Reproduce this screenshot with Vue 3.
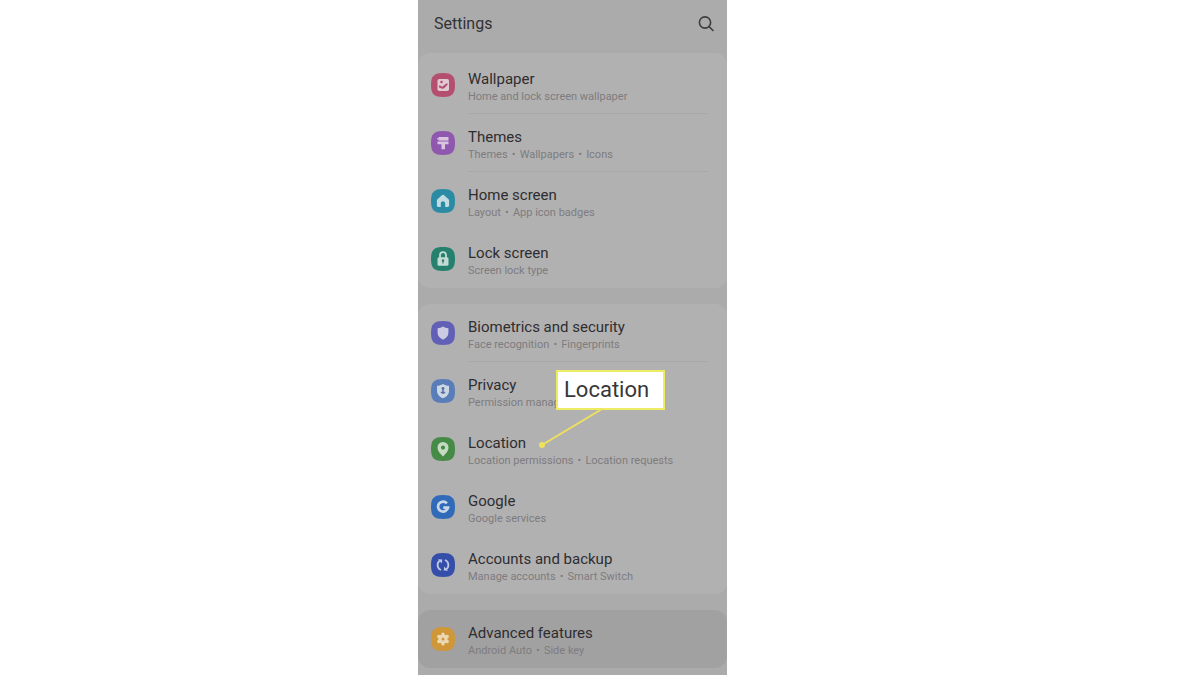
<script setup>
const groups = [
  {
    id: 'display',
    items: [
      { id: 'wallpaper', title: 'Wallpaper', details: ['Home and lock screen wallpaper'], color: '#b54f70', line: true },
      { id: 'themes', title: 'Themes', details: ['Themes', 'Wallpapers', 'Icons'], color: '#8f57ae', line: true },
      { id: 'home', title: 'Home screen', details: ['Layout', 'App icon badges'], color: '#2b8ba4' },
      { id: 'lock', title: 'Lock screen', details: ['Screen lock type'], color: '#26806e' },
    ],
  },
  {
    id: 'security',
    items: [
      { id: 'biometrics', title: 'Biometrics and security', details: ['Face recognition', 'Fingerprints'], color: '#6160b6', line: true },
      { id: 'privacy', title: 'Privacy', details: ['Permission manager'], color: '#587db8' },
      { id: 'location', title: 'Location', details: ['Location permissions', 'Location requests'], color: '#458b46', callout: 'Location' },
      { id: 'google', title: 'Google', details: ['Google services'], color: '#316ab9' },
      { id: 'accounts', title: 'Accounts and backup', details: ['Manage accounts', 'Smart Switch'], color: '#344eaa' },
    ],
  },
  {
    id: 'advanced',
    pressed: true,
    items: [
      { id: 'features', title: 'Advanced features', details: ['Android Auto', 'Side key'], color: '#cf9738' },
    ],
  },
]
</script>

<template>
  <div class="page">
    <main class="phone">
      <header class="header">
        <h1 class="heading">Settings</h1>
        <button class="search" type="button" aria-label="Search">
          <svg viewBox="0 0 18 18" width="18" height="18" fill="none" stroke="#3c3b3d" stroke-width="1.6" stroke-linecap="round">
            <circle cx="8" cy="7.500" r="5.600" />
            <path d="M12.200 11.700 16 15.500" />
          </svg>
        </button>
      </header>

      <nav class="groups" aria-label="Settings">
        <ul v-for="group in groups" :key="group.id" class="group" :class="{ pressed: group.pressed }">
          <li v-for="item in group.items" :key="item.id" class="item">
            <a class="row" :href="'#' + item.id">
              <svg class="icon" viewBox="0 0 24 24" width="24" height="24" aria-hidden="true">
                <path d="M12 0C21 0 24 3 24 12S21 24 12 24 0 21 0 12 3 0 12 0Z" :fill="item.color" />
                <g v-if="item.id === 'wallpaper'">
                  <rect x="6.500" y="6" width="11.500" height="12" rx="1.800" fill="#e0c9d2" />
                  <circle cx="10.500" cy="9" r="1.300" :fill="item.color" />
                  <path d="M8 12.600c1.200-.4 2 .5 2.900 1 1.300.5 2.200-2.700 5.600-3.400v1.800c-1.700 1-2.700 3.600-4.700 3.700-1.500.1-2.300-1.300-3.800-1.300Z" :fill="item.color" />
                </g>
                <g v-else-if="item.id === 'themes'" fill="#d9c5e1">
                  <path d="M7.500 6h10v3.600h-10Z" />
                  <path d="M6 7.300h1.500v1.200H6ZM6.500 10.600h11v2.700h-3.500V18.300h-3.500v-5H6.500Z" />
                </g>
                <path v-else-if="item.id === 'home'" fill="#c3dce2" d="M12 5.800c.5 0 .8.2 1.100.5l4.400 4c.4.4.6.8.6 1.300v5c0 .8-.5 1.300-1.300 1.300h-2.600v-3.600c0-2.700-4.400-2.700-4.400 0v3.600H7.200c-.8 0-1.300-.5-1.300-1.300v-5c0-.5.2-.9.6-1.300l4.400-4c.3-.3.6-.5 1.100-.5Z" />
                <g v-else-if="item.id === 'lock'">
                  <path d="M9 11V8.200a3 3 0 0 1 6 0V11" fill="none" stroke="#c2dcd5" stroke-width="1.800" />
                  <rect x="6.500" y="10.300" width="11" height="8.500" rx="1.500" fill="#c2dcd5" />
                  <circle cx="12" cy="13.600" r="1.300" fill="#47776d" />
                  <path d="M12 14v2.600" stroke="#47776d" stroke-width="1.200" />
                </g>
                <path v-else-if="item.id === 'biometrics'" fill="#cdcbe3" d="M12 5.600c1.700 1.200 3.400 1.600 5.400 1.700v4.500c0 3.300-2 5.200-5.400 6.900-3.400-1.700-5.400-3.600-5.400-6.900V7.300c2-.1 3.700-.5 5.400-1.700Z" />
                <g v-else-if="item.id === 'privacy'">
                  <path fill="#cbd7e5" d="M12 5c1.900 1.300 3.700 1.700 6 1.800v4.900c0 3.700-2.300 5.800-6 7.600-3.700-1.800-6-3.900-6-7.600V6.800C8.300 6.700 10.100 6.300 12 5Z" />
                  <circle cx="12" cy="9.500" r="1.400" fill="#53719d" />
                  <path d="M12 10v5M9.800 13.500h4.400" stroke="#53719d" stroke-width="1.400" />
                </g>
                <path v-else-if="item.id === 'location'" fill="#c5dac3" fill-rule="evenodd" d="M12 5a5.500 5.500 0 0 1 5.500 5.500c0 3.400-2.600 6-5.500 9-2.900-3-5.500-5.600-5.500-9A5.500 5.500 0 0 1 12 5Zm0 3.500a2.100 2.100 0 1 0 0 4.200 2.100 2.100 0 0 0 0-4.200Z" />
                <path v-else-if="item.id === 'google'" fill="none" stroke="#c8d7e8" stroke-width="2.700" d="M15.900 8.300A5 5 0 1 0 17 12.600H12.300" />
                <g v-else-if="item.id === 'accounts'">
                  <g fill="none" stroke="#bfc9e6" stroke-width="1.800">
                    <path d="M10 17A5.400 5.400 0 0 1 8.600 7.800" />
                    <path d="M14 7a5.400 5.400 0 0 1 1.400 9.200" />
                  </g>
                  <path fill="#bfc9e6" d="m7 6.200 4.300.2-.6 4ZM17 17.800l-4.300-.2.600-4Z" />
                </g>
                <g v-else>
                  <path d="M12 7v10M7.700 9.500l8.600 5M7.700 14.500l8.600-5" stroke="#ecd9b4" stroke-width="3.200" stroke-linecap="round" />
                  <circle cx="12" cy="12" r="4.600" fill="#ecd9b4" />
                  <circle cx="12" cy="12" r="1.500" :fill="item.color" />
                </g>
              </svg>
              <span class="text" :class="{ line: item.line }">
                <span class="title">{{ item.title }}</span>
                <span class="details">
                  <template v-for="(detail, i) in item.details" :key="detail">
                    <span v-if="i" class="dot">•</span>
                    <span>{{ detail }}</span>
                  </template>
                </span>
              </span>
            </a>
            <div v-if="item.callout" class="callout">
              <strong class="callout-label">{{ item.callout }}</strong>
              <svg class="pointer" viewBox="0 0 68 42" width="68" height="42" aria-hidden="true">
                <path d="M64 1 4 37" stroke="#eee15c" stroke-width="2" />
                <circle cx="4" cy="37" r="3" fill="#eee15c" />
              </svg>
            </div>
          </li>
        </ul>
      </nav>
    </main>
  </div>
</template>

<style>
body {
  margin: 0;
  background: #fff;
}
</style>

<style scoped>
.page {
  display: grid;
  grid-template-columns: 418fr minmax(309px, 309fr) 473fr;
  min-height: 100vh;
  font-family: Roboto, "Liberation Sans", sans-serif;
}
.phone {
  grid-column: 2;
  background: #acabac;
}
.header {
  display: flex;
  align-items: center;
  justify-content: space-between;
  height: 47px;
  padding: 0 12px 6px 16px;
}
.heading {
  margin: 0;
  font-size: 16px;
  line-height: 20px;
  font-weight: 400;
  color: #323133;
}
.search {
  display: flex;
  padding: 0;
  border: 0;
  background: none;
}
.groups {
  display: flex;
  flex-direction: column;
  gap: 16px;
}
.group {
  margin: 0;
  padding: 0;
  list-style: none;
  border-radius: 12px;
  background: #b2b1b2;
}
.group:first-child {
  padding-top: 3px;
}
.pressed {
  background: #a2a1a2;
}
.item {
  position: relative;
}
.row {
  display: flex;
  align-items: center;
  gap: 13px;
  height: 58px;
  padding: 0 19px 0 13px;
  color: inherit;
  text-decoration: none;
}
.icon {
  flex: none;
}
.text {
  display: flex;
  flex: 1;
  flex-direction: column;
  box-sizing: border-box;
  height: 58px;
  padding-top: 13px;
  border-bottom: 1px solid transparent;
  white-space: nowrap;
}
.line {
  border-bottom-color: #a9a8a9;
}
.title {
  font-size: 15px;
  line-height: 20px;
  color: #2e2d2f;
}
.details {
  display: flex;
  font-size: 11px;
  line-height: 15px;
  color: #7d7c7e;
}
.dot {
  width: 12px;
  text-align: center;
}
.callout {
  position: absolute;
  top: -50px;
  left: 138px;
  z-index: 1;
}
.callout-label {
  display: block;
  box-sizing: border-box;
  width: 109px;
  height: 40px;
  padding-left: 6px;
  border: 2px solid #eeec62;
  background: #fff;
  font-size: 22px;
  line-height: 36px;
  font-weight: 400;
  color: #38373a;
}
.pointer {
  position: absolute;
  top: 38px;
  left: -18px;
}
</style>
